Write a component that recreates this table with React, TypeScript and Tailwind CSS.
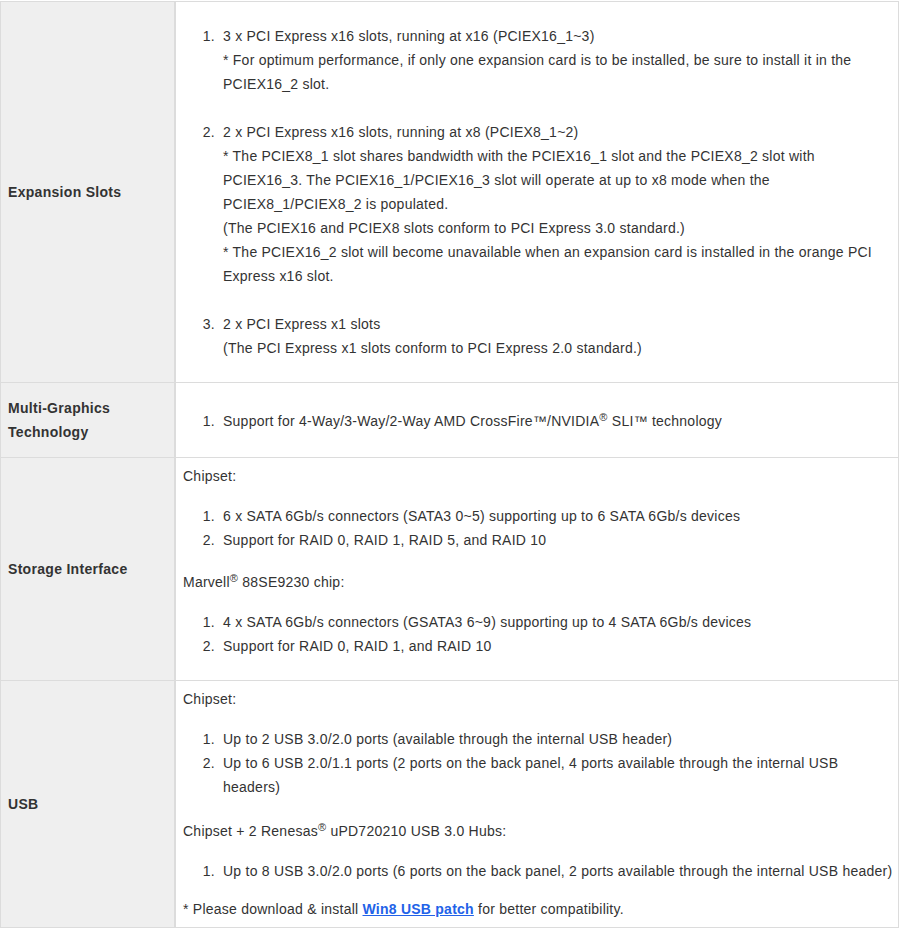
import React from "react";

type Item = React.ReactNode;

function List({ items, className = "", gap = false }: { items: Item[]; className?: string; gap?: boolean }) {
  return (
    <ol className={className}>
      {items.map((it, i) => (
        <li key={i} className={`flex ${gap && i < items.length - 1 ? "mb-6" : ""}`}>
          <span className="w-[40px] shrink-0 pr-2 text-right">{i + 1}.</span>
          <div className="min-w-0 flex-1">{it}</div>
        </li>
      ))}
    </ol>
  );
}

const R = () => <sup className="text-[11px]">®</sup>;

function Row({ label, children, first = false }: { label: React.ReactNode; children: React.ReactNode; first?: boolean }) {
  return (
    <div className={`grid grid-cols-[175px_1fr] ${first ? "" : "border-t border-[#dcdcdc]"}`}>
      <div className="flex items-center border-r-2 border-[#dcdcdc] bg-[#efefef] pl-[7px] pr-2 font-bold tracking-[0.3px]">{label}</div>
      <div className="pl-[7px] pr-[7px] py-[6px]">{children}</div>
    </div>
  );
}

export default function App() {
  return (
    <div className="bg-white pt-px font-['Liberation_Sans',Arial,sans-serif] text-[14px] leading-[24px] tracking-[0.24px] text-[#333]">
      <div className="w-[899px] border border-[#dcdcdc]">
        <Row first label="Expansion Slots">
          <List
            gap
            className="my-4"
            items={[
              <>
                3 x PCI Express x16 slots, running at x16 (PCIEX16_1~3)
                <br />* For optimum performance, if only one expansion card is to be installed, be sure to install it in the PCIEX16_2 slot.
              </>,
              <>
                2 x PCI Express x16 slots, running at x8 (PCIEX8_1~2)
                <br />* The PCIEX8_1 slot shares bandwidth with the PCIEX16_1 slot and the PCIEX8_2 slot with PCIEX16_3. The PCIEX16_1/PCIEX16_3 slot will operate at up to x8 mode when the PCIEX8_1/PCIEX8_2 is populated.
                <br />(The PCIEX16 and PCIEX8 slots conform to PCI Express 3.0 standard.)
                <br />* The PCIEX16_2 slot will become unavailable when an expansion card is installed in the orange PCI Express x16 slot.
              </>,
              <>
                2 x PCI Express x1 slots
                <br />(The PCI Express x1 slots conform to PCI Express 2.0 standard.)
              </>,
            ]}
          />
        </Row>
        <Row label={<span>Multi-Graphics Technology</span>}>
          <List
            className="mt-4 mb-4 pt-[4px] pb-[2px]"
            items={[
              <>
                Support for 4-Way/3-Way/2-Way AMD CrossFire™/NVIDIA<R /> SLI™ technology
              </>,
            ]}
          />
        </Row>
        <Row label="Storage Interface">
          <p>Chipset:</p>
          <List
            className="my-4"
            items={[
              "6 x SATA 6Gb/s connectors (SATA3 0~5) supporting up to 6 SATA 6Gb/s devices",
              "Support for RAID 0, RAID 1, RAID 5, and RAID 10",
            ]}
          />
          <p className="pt-[2px]">
            Marvell<R /> 88SE9230 chip:
          </p>
          <List
            className="my-4"
            items={[
              "4 x SATA 6Gb/s connectors (GSATA3 6~9) supporting up to 4 SATA 6Gb/s devices",
              "Support for RAID 0, RAID 1, and RAID 10",
            ]}
          />
        </Row>
        <Row label="USB">
          <p>Chipset:</p>
          <List
            className="my-4"
            items={[
              "Up to 2 USB 3.0/2.0 ports (available through the internal USB header)",
              "Up to 6 USB 2.0/1.1 ports (2 ports on the back panel, 4 ports available through the internal USB headers)",
            ]}
          />
          <p className="pt-[4px]">
            Chipset + 2 Renesas<R /> uPD720210 USB 3.0 Hubs:
          </p>
          <List
            className="mt-4 mb-[14px] whitespace-nowrap"
            items={["Up to 8 USB 3.0/2.0 ports (6 ports on the back panel, 2 ports available through the internal USB header)"]}
          />
          <p>
            * Please download &amp; install{" "}
            <a href="#" className="font-bold text-[#2262e8] underline">
              Win8 USB patch
            </a>{" "}
            for better compatibility.
          </p>
        </Row>
      </div>
    </div>
  );
}
